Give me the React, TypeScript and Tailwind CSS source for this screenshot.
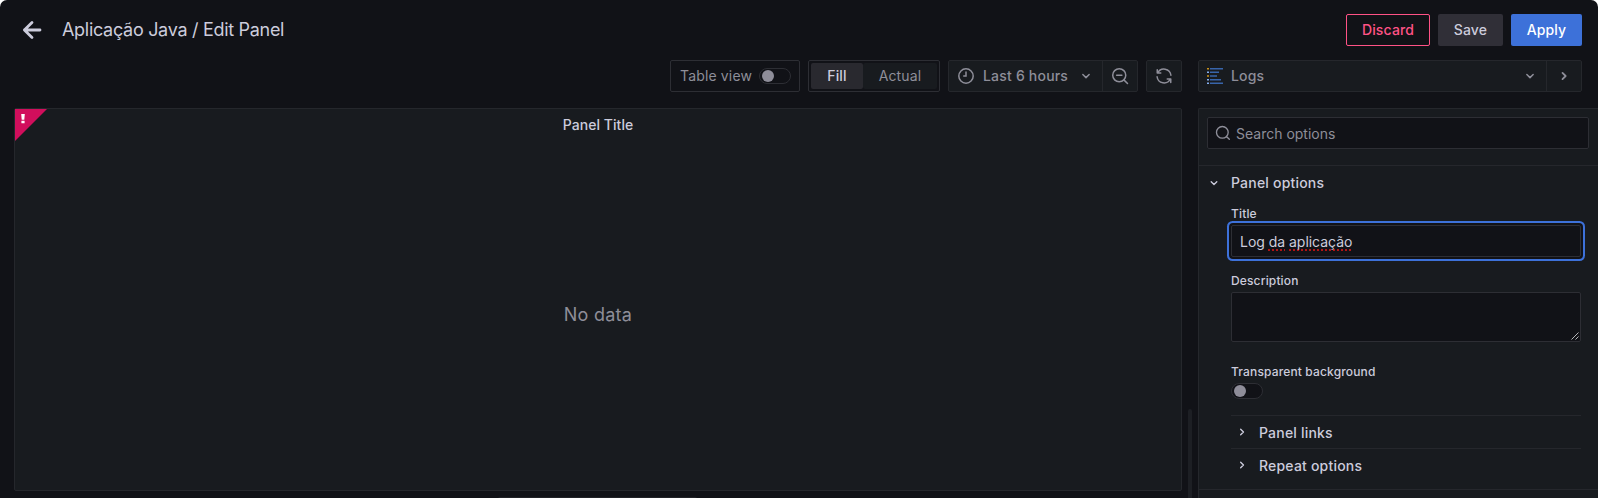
import React from 'react';

type IconProps = { d: string; size?: number; className?: string; width?: number };

const Icon = ({ d, size = 16, className = '', width = 2 }: IconProps) => (
  <svg
    width={size}
    height={size}
    viewBox="0 0 24 24"
    fill="none"
    stroke="currentColor"
    strokeWidth={width}
    strokeLinecap="round"
    strokeLinejoin="round"
    className={`shrink-0 ${className}`}
  >
    <path d={d} />
  </svg>
);

const CHEVRON_DOWN = 'M7.8 10 12 14.2 16.2 10';
const CHEVRON_RIGHT = 'M10 7.8 14.2 12 10 16.2';

const Switch = () => (
  <span className="flex h-4 w-8 shrink-0 items-center rounded-full border border-[#2d2e34] bg-[#111217] pl-[2px]">
    <span className="size-3 rounded-full bg-[#8e8d99]" />
  </span>
);

const LogsIcon = () => (
  <svg width="16" height="16" viewBox="0 0 16 16" className="shrink-0">
    <path d="M0 .7h2M0 8h2" stroke="#c9921a" strokeWidth="1.4" />
    <path d="M0 4.3h2M0 11.7h2M0 15.3h2" stroke="#84aff1" strokeWidth="1.4" />
    <path d="M3 .7h13M3 4.3h9M3 8h7M3 11.7h11M3 15.3h13" stroke="#3865ab" strokeWidth="1.4" />
  </svg>
);

const Misspelled = ({ children }: { children: React.ReactNode }) => (
  <u className="decoration-[#b01414] decoration-dotted decoration-[1.5px] underline-offset-[2px] [text-decoration-skip-ink:none]">
    {children}
  </u>
);

const SubCategory = ({ title }: { title: string }) => (
  <div className="flex h-[33px] items-center border-t border-[#25272c] pl-[3px]">
    <Icon d={CHEVRON_RIGHT} className="mr-[9px] -mt-[1px]" />
    <span className="pt-[2px] font-medium tracking-[0.2px] text-[#ccccdc]">{title}</span>
  </div>
);

const Header = () => (
  <header className="flex h-[60px] shrink-0 items-center pl-[20px] pr-[16px]">
    <Icon d="M20 12H4.4M12 4.4 4.4 12l7.6 7.6" size={24} width={2.8} />
    <h1 className="ml-[18px] text-lg leading-[22px] tracking-[-0.3px] text-[#ccccdc]">Aplicação Java / Edit Panel</h1>
    <div className="ml-auto flex gap-2 font-medium">
      <button className="h-8 w-[84px] rounded-[2px] border border-[#ff5286] text-[#ff5286]">Discard</button>
      <button className="h-8 w-[65px] rounded-[2px] bg-[#302f37]">Save</button>
      <button className="h-8 w-[71px] rounded-[2px] bg-[#3d71d9] text-white">Apply</button>
    </div>
  </header>
);

const Toolbar = () => (
  <div className="flex h-8 justify-end gap-2 text-[#8e8e99]">
    <div className="flex w-[130px] items-center justify-between rounded-[2px] border border-[#2d2e34] pl-[9px] pr-2">
      <span>Table view</span>
      <Switch />
    </div>
    <div className="flex w-[132px] rounded-[2px] border border-[#2d2e34] p-[2px]">
      <span className="flex w-[52px] items-center justify-center rounded-[2px] bg-[#29292f] font-medium text-[#ccccdc]">Fill</span>
      <span className="flex flex-1 items-center justify-center rounded-[2px] bg-[#181b1f]">Actual</span>
    </div>
    <div className="flex w-[190px] rounded-[2px] border border-[#25272c] bg-[#181b1f] font-medium">
      <div className="flex w-[154px] items-center border-r border-[#25272c] pl-[8px]">
        <svg width="18" height="18" viewBox="0 0 24 24" fill="none" stroke="currentColor" strokeWidth="2" strokeLinecap="round" className="shrink-0">
          <circle cx="12" cy="12" r="9.6" />
          <path d="M12 6.5V12H9" />
        </svg>
        <span className="ml-2 tracking-[0.2px]">Last 6 hours</span>
        <Icon d={CHEVRON_DOWN} size={18} className="ml-[9px]" />
      </div>
      <div className="flex flex-1 items-center justify-center">
        <svg width="18" height="18" viewBox="0 0 24 24" fill="none" stroke="currentColor" strokeWidth="2" strokeLinecap="round">
          <circle cx="11" cy="11" r="8.7" />
          <path d="M17.5 17.5 22 22M7.5 11h7" />
        </svg>
      </div>
    </div>
    <div className="flex w-9 items-center justify-center rounded-[2px] border border-[#25272c] bg-[#181b1f]">
      <Icon size={18} d="M3 3.5V8h4.7M3.6 8A9.3 9.3 0 0 1 21.2 11M21 20.5V16h-4.7M20.4 16A9.3 9.3 0 0 1 2.8 13" />
    </div>
  </div>
);

const Preview = () => (
  <section className="relative mt-4 flex h-[383px] flex-col rounded-[2px] border border-[#25272c] bg-[#181b1f]">
    <svg width="32" height="32" className="absolute left-0 top-0">
      <path d="M0 0h32L0 32z" fill="#d10e5c" />
      <path d="M6.2 5h3.6l-.5 5.7H6.7zM6.4 11.7h3.2v2.6H6.4z" fill="#fff" />
    </svg>
    <h2 className="pt-[5px] text-center font-medium tracking-[0.06px] text-[#ccccdc]">Panel Title</h2>
    <div className="flex flex-1 items-center justify-center pt-[4px] text-lg tracking-[0.25px] text-[#8e8e99]">No data</div>
  </section>
);

const Options = () => (
  <aside className="mt-4 h-[390px] w-[400px] overflow-hidden rounded-tl-[2px] border-l border-t border-[#25272c] bg-[#181b1f]">
    <div className="h-[57px] border-b border-[#25272c] pl-2 pt-2">
      <div className="flex h-8 w-[382px] items-center rounded-[2px] border border-[#2d2e34] bg-[#111217] pl-[7px] text-[#8e8e99]">
        <svg width="16" height="16" viewBox="0 0 24 24" fill="none" stroke="currentColor" strokeWidth="2" strokeLinecap="round" className="-mt-px">
          <circle cx="11" cy="11" r="8.8" />
          <path d="m17.5 17.5 4 4" />
        </svg>
        <span className="ml-[5px] pt-px tracking-normal">Search options</span>
      </div>
    </div>
    <div className="flex h-[35px] items-center pl-[7px]">
      <Icon d={CHEVRON_DOWN} className="-mt-[2px]" />
      <span className="-mt-[2px] ml-[9px] font-medium tracking-[0.2px]">Panel options</span>
    </div>
    <div className="ml-8 w-[350px]">
      <div className="flex h-6 items-center pt-[1px] text-xs font-medium">Title</div>
      <div className="flex h-8 items-center rounded-[2px] border border-[#2d2e34] bg-[#111217] px-2 pt-[2px] tracking-[-0.03px] shadow-[0_0_0_2px_#111217,0_0_0_4px_#3d71d9]">
        <span className="whitespace-pre">
          Log <Misspelled>da</Misspelled> <Misspelled>aplicação</Misspelled>
        </span>
      </div>
      <div className="mt-[15px] h-5 text-xs font-medium leading-[18px]">Description</div>
      <div className="flex h-[50px] items-end justify-end rounded-[2px] border border-[#2d2e34] bg-[#111217] p-[1px]">
        <svg width="8" height="8" viewBox="0 0 8 8" stroke="#b5b5b8" strokeWidth="1">
          <path d="M.5 7.5l7-7M4.5 7.5l3-3" />
        </svg>
      </div>
      <div className="mt-[21px] h-5 text-xs font-medium leading-[18px]">Transparent background</div>
      <Switch />
      <div className="mt-4">
        <SubCategory title="Panel links" />
        <SubCategory title="Repeat options" />
      </div>
    </div>
    <div className="mt-2 border-t border-[#25272c]" />
  </aside>
);

export default function App() {
  return (
    <div className="h-[498px] w-[1599px] overflow-hidden bg-white">
      <div className="flex h-full w-[1598px] flex-col overflow-hidden rounded-t-[7px] bg-[#111217] font-[Inter,sans-serif] text-sm leading-[22px] tracking-[0.15px] text-[#ccccdc]">
        <Header />
        <div className="flex h-[438px] overflow-hidden">
          <main className="ml-[14px] w-[1168px] shrink-0">
            <Toolbar />
            <Preview />
            <div className="ml-[484px] mt-[6px] h-1 w-[199px] rounded-full bg-[#222328]" />
          </main>
          <div className="ml-[6px] mt-[349px] h-[100px] w-1 shrink-0 rounded-full bg-[#1d1f24]" />
          <div className="ml-[6px] w-[400px] shrink-0">
            <div className="flex h-8 w-[384px] rounded-[2px] border border-[#25272c] bg-[#181b1f] text-[#8e8e99]">
              <div className="flex w-[348px] items-center border-r border-[#25272c] pl-2 pr-[7px]">
                <LogsIcon />
                <span className="ml-2 font-medium">Logs</span>
                <Icon d={CHEVRON_DOWN} size={18} className="ml-auto" />
              </div>
              <div className="flex flex-1 items-center justify-center">
                <Icon d={CHEVRON_RIGHT} size={18} width={2.4} />
              </div>
            </div>
            <Options />
          </div>
        </div>
      </div>
    </div>
  );
}
